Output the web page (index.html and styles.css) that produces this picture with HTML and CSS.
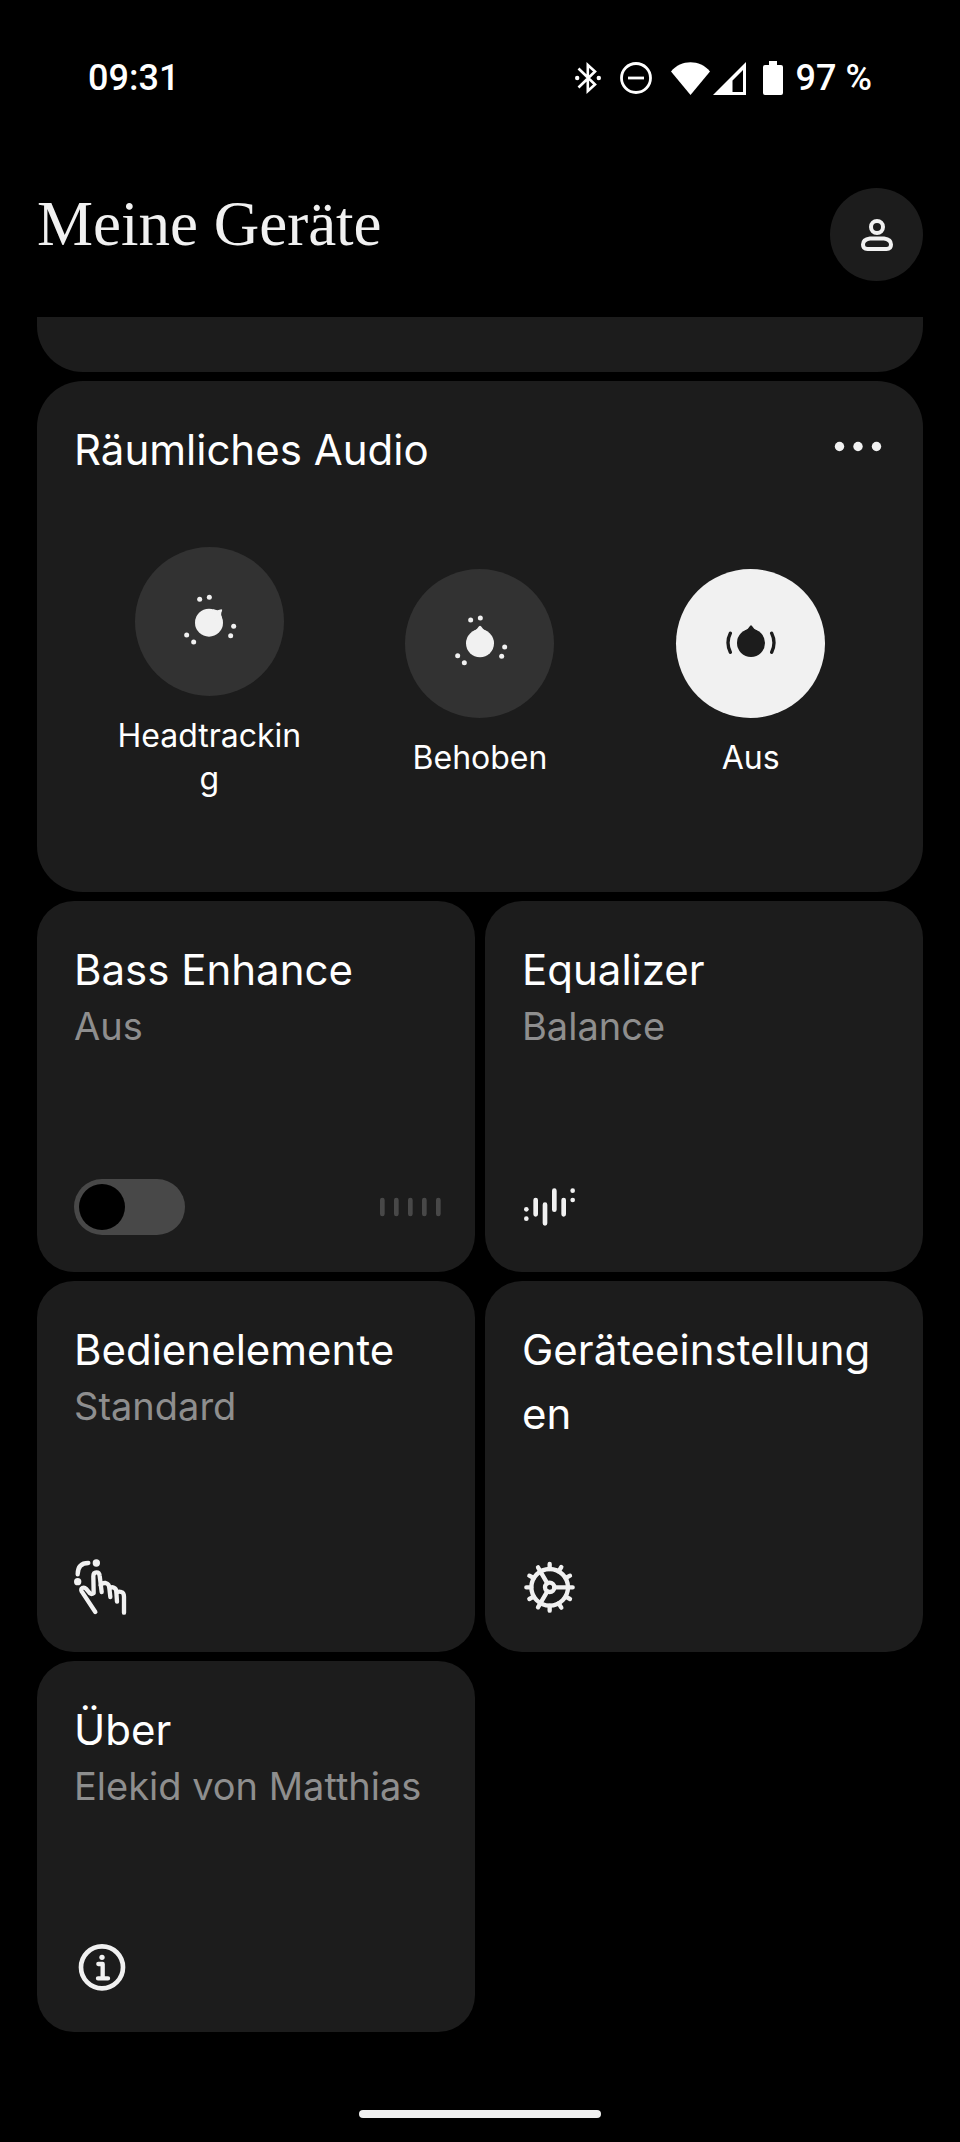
FILE: index.html
```html
<!DOCTYPE html>
<html lang="de">
<head>
    <meta charset="UTF-8">
    <meta name="viewport" content="width=device-width, initial-scale=1.0">
    <title>Meine Geräte</title>
    <link rel="stylesheet" href="styles.css">
</head>
<body>
    <div class="statusbar">
        <time class="clock">09:31</time>
        <div class="status-icons">
            <svg class="bluetooth" width="26" height="32" viewBox="0 0 26 32" fill="none" stroke="#fff" stroke-width="2.6">
                <path d="M3.5 6.5 20 22.5 12.8 29V3L20 9.5 3.5 25.5"/>
                <circle cx="2.2" cy="16" r="2.2" fill="#fff" stroke="none"/>
                <circle cx="23.8" cy="16" r="2.2" fill="#fff" stroke="none"/>
            </svg>
            <svg class="dnd" width="32" height="32" viewBox="0 0 32 32" fill="none" stroke="#fff" stroke-width="2.8">
                <circle cx="16" cy="16" r="14.5"/>
                <path d="M8 16h16"/>
            </svg>
            <svg class="wifi" width="39" height="33" viewBox="0 0 39 33" fill="#fff">
                <path d="M19.5 33 0 9.5C10-2.7 29-2.7 39 9.5Z"/>
            </svg>
            <svg class="signal" width="33" height="33" viewBox="0 0 33 33" fill="#fff">
                <path fill-rule="evenodd" d="M33 0v33H0ZM30 8 19.5 18.5V30H30Z"/>
            </svg>
            <svg class="battery" width="20" height="34" viewBox="0 0 20 34" fill="#fff">
                <path d="M6 0h8v4h4q2 0 2 2v26q0 2-2 2H2q-2 0-2-2V6q0-2 2-2h4Z"/>
            </svg>
            <span>97 %</span>
        </div>
    </div>

    <header class="header">
        <h1>Meine Geräte</h1>
        <button class="profile" aria-label="Profil">
            <svg width="34" height="34" viewBox="0 0 34 34" fill="none" stroke="#f1f1f1" stroke-width="4">
                <circle cx="17" cy="9" r="6"/>
                <path d="M10 20.500h14q7 1 7 6 0 4.500-4.500 4.500h-19q-4.500 0-4.500-4.500 0-5 7-6Z"/>
            </svg>
        </button>
    </header>

    <main class="content">
        <div class="card card-cut"></div>

        <section class="card spatial">
            <div class="card-head">
                <h2>Räumliches Audio</h2>
                <button class="more" aria-label="Mehr">
                    <svg width="56" height="56" viewBox="0 0 56 56" fill="#f1f1f1">
                        <circle cx="9.5" cy="28.5" r="4.7"/>
                        <circle cx="28" cy="28.5" r="4.7"/>
                        <circle cx="46.5" cy="28.5" r="4.7"/>
                    </svg>
                </button>
            </div>
            <div class="options">
                <button class="option">
                    <span class="disc">
                        <svg class="icon" viewBox="0 0 168 168" fill="currentColor">
                            <circle cx="84" cy="86" r="42"/>
                            <path d="M96 46Q110 51 121 46 125 46 123 51 118 60 123 72L100 80Z"/>
                            <circle cx="56" cy="16" r="7.5"/><circle cx="85" cy="10" r="7.5"/>
                            <circle cx="158" cy="97" r="7.5"/><circle cx="149" cy="125" r="7.5"/>
                            <circle cx="17" cy="123" r="7.5"/><circle cx="38" cy="144" r="7.5"/>
                        </svg>
                    </span>
                    <span class="label">Headtrackin<wbr>g</span>
                </button>
                <button class="option">
                    <span class="disc">
                        <svg class="icon" viewBox="0 0 168 168" fill="currentColor">
                            <circle cx="84" cy="85" r="42"/>
                            <path d="M66 48Q75 44 81 34 84 30 87 34 93 44 102 48L84 70Z"/>
                            <circle cx="56" cy="15" r="7.5"/><circle cx="85" cy="9" r="7.5"/>
                            <circle cx="158" cy="96" r="7.5"/><circle cx="149" cy="124" r="7.5"/>
                            <circle cx="17" cy="122" r="7.5"/><circle cx="37" cy="143" r="7.5"/>
                        </svg>
                    </span>
                    <span class="label">Behoben</span>
                </button>
                <button class="option active">
                    <span class="disc">
                        <svg class="icon" viewBox="0 0 168 168" fill="currentColor">
                            <circle cx="84" cy="84" r="42"/>
                            <path d="M66 47Q75 43 81 33 84 29 87 33 93 43 102 47L84 69Z"/>
                            <path d="M22 55Q8 83 22 112M146 55Q160 83 146 112" fill="none" stroke="currentColor" stroke-width="10" stroke-linecap="round"/>
                        </svg>
                    </span>
                    <span class="label">Aus</span>
                </button>
            </div>
        </section>

        <div class="tiles">
            <section class="card tile">
                <h2><label for="bass">Bass Enhance</label></h2>
                <p>Aus</p>
                <div class="tile-foot">
                    <input type="checkbox" id="bass" class="toggle">
                    <svg class="icon" viewBox="0 0 168 168" stroke="#484848" stroke-width="14" stroke-linecap="round">
                        <path d="M1 63v42M43 63v42M85 63v42M127 63v42M169 63v42"/>
                    </svg>
                </div>
            </section>
            <a class="card tile" href="#equalizer">
                <h2>Equalizer</h2>
                <p>Balance</p>
                <div class="tile-foot">
                    <svg class="icon" viewBox="0 0 168 168" fill="currentColor">
                        <path d="M41 63v43M69 77v56M97 35v57M125 63v43" stroke="currentColor" stroke-width="14" stroke-linecap="round"/>
                        <circle cx="13" cy="91" r="7"/><circle cx="13" cy="119" r="7"/>
                        <circle cx="152" cy="35" r="7"/><circle cx="152" cy="63" r="7"/>
                    </svg>
                </div>
            </a>
            <a class="card tile" href="#bedienelemente">
                <h2>Bedienelemente</h2>
                <p>Standard</p>
                <div class="tile-foot">
                    <svg class="icon" viewBox="0 0 168 168" fill="none" stroke="currentColor" stroke-width="13" stroke-linecap="round" stroke-linejoin="round">
                        <circle cx="67" cy="12" r="11" fill="currentColor" stroke="none"/>
                        <circle cx="11" cy="68" r="11" fill="currentColor" stroke="none"/>
                        <path d="M43 12Q11 12 11 46"/>
                        <path d="M64 159 23 97Q20 90 25 87 31 84 36 89L48 103Q53 107 59 102L58 52Q58 40 67 40 76 40 77 50L83 99"/>
                        <path d="M80 78Q84 71 95 72 106 75 106 87L109 114M106 88Q112 83 120 86 127 89 127 99L129 128M127 101Q134 96 142 99 150 101 150 113V161"/>
                    </svg>
                </div>
            </a>
            <a class="card tile" href="#einstellungen">
                <h2>Geräteeinstellung<wbr>en</h2>
                <div class="tile-foot">
                    <svg class="icon" viewBox="0 0 168 168" fill="none" stroke="currentColor" stroke-width="13" stroke-linecap="round">
                        <circle cx="83" cy="85" r="55"/>
                        <circle cx="83" cy="85" r="14"/>
                        <path d="M97 85h55M76 97 48 145M76 73 48 25"/>
                        <path d="M83 30V15M83 140v15M28 85H13M110 37l8-13M131 57l13-7M131 113l13 7M110 133l8 13M35 113l-13 7M35 57l-13-7"/>
                    </svg>
                </div>
            </a>
            <a class="card tile" href="#ueber">
                <h2>Über</h2>
                <p>Elekid von Matthias</p>
                <div class="tile-foot">
                    <svg class="icon" viewBox="0 0 168 168" fill="none" stroke="currentColor" stroke-width="14" stroke-linecap="round" stroke-linejoin="round">
                        <circle cx="84" cy="85" r="63"/>
                        <circle cx="84" cy="55" r="8" fill="currentColor" stroke="none"/>
                        <path d="M73 75h13v43M72 118h30" stroke-width="13"/>
                    </svg>
                </div>
            </a>
        </div>
    </main>

    <div class="home-indicator"></div>
</body>
</html>
```

FILE: styles.css
```css
* {
    box-sizing: border-box;
}
body {
    margin: 0;
    min-height: 100vh;
    display: flex;
    flex-direction: column;
    background-color: #000;
    color: #fff;
    font-family: Inter, "Liberation Sans", sans-serif;
}
h1, h2, p {
    margin: 0;
    font-weight: 400;
}
button {
    padding: 0;
    border: none;
    background: none;
    color: inherit;
    font: inherit;
    cursor: pointer;
}
svg {
    display: block;
    flex-shrink: 0;
}

/* status bar */
.statusbar {
    height: 156px;
    padding: 0 88px;
    display: flex;
    align-items: center;
    justify-content: space-between;
    font-family: Roboto, sans-serif;
    font-size: 36px;
    font-weight: 500;
}
.status-icons {
    display: flex;
    align-items: center;
}
.bluetooth, .dnd {
    margin-right: 19px;
}
.wifi {
    margin-right: 3px;
}
.signal {
    margin-right: 17px;
}
.battery {
    margin-right: 13px;
}

/* header */
.header {
    padding: 32px 37px 36px;
    display: flex;
    justify-content: space-between;
    align-items: flex-start;
}
h1 {
    font-family: "Liberation Serif", serif;
    font-size: 63px;
    line-height: 73px;
    color: #f1f1f1;
}
.profile {
    width: 93px;
    height: 93px;
    border-radius: 50%;
    background-color: #1c1c1c;
    display: flex;
    align-items: center;
    justify-content: center;
}

/* cards */
.content {
    padding: 0 37px;
    display: flex;
    flex-direction: column;
    gap: 9px;
}
.card {
    background-color: #1c1c1c;
    border-radius: 37px;
    padding: 37px;
}
.card-cut {
    height: 55px;
    padding: 0;
    border-radius: 0 0 46px 46px;
}
.spatial {
    border-radius: 46px;
}
.card-head {
    display: flex;
    justify-content: space-between;
    align-items: flex-start;
}
h2 {
    font-size: 42px;
    line-height: 64px;
}
.options {
    padding: 65px 0 55px;
    display: grid;
    grid-template-columns: repeat(3, 1fr);
    align-items: center;
}
.option {
    display: flex;
    flex-direction: column;
    align-items: center;
    gap: 18px;
}
.disc {
    width: 149px;
    height: 149px;
    border-radius: 50%;
    background-color: #323232;
    color: #f1f1f1;
    display: flex;
    align-items: center;
    justify-content: center;
}
.active .disc {
    background-color: #f1f1f1;
    color: #1c1c1c;
}
.label {
    max-width: 190px;
    font-size: 32px;
    line-height: 43px;
    text-align: center;
}
.icon {
    width: 56px;
    height: 56px;
    overflow: visible;
}

/* tiles */
.tiles {
    display: grid;
    grid-template-columns: 1fr 1fr;
    gap: 9px 10px;
}
.tile {
    min-width: 0;
    min-height: 371px;
    display: flex;
    flex-direction: column;
    color: #fff;
    text-decoration: none;
}
.tile p {
    font-size: 38px;
    line-height: 48px;
    color: #8e8e8e;
}
.tile-foot {
    margin-top: auto;
    display: flex;
    justify-content: space-between;
    align-items: center;
    color: #f1f1f1;
}
.toggle {
    appearance: none;
    width: 111px;
    height: 56px;
    margin: 0;
    padding: 5px;
    border-radius: 28px;
    background-color: #484848;
    display: flex;
    cursor: pointer;
}
.toggle::before {
    content: "";
    width: 46px;
    height: 46px;
    border-radius: 50%;
    background-color: #000;
}
.toggle:checked {
    justify-content: flex-end;
    background-color: #f1f1f1;
}

.home-indicator {
    width: 242px;
    height: 8px;
    margin: auto auto 24px;
    border-radius: 4px;
    background-color: #f1f1f1;
}
```
